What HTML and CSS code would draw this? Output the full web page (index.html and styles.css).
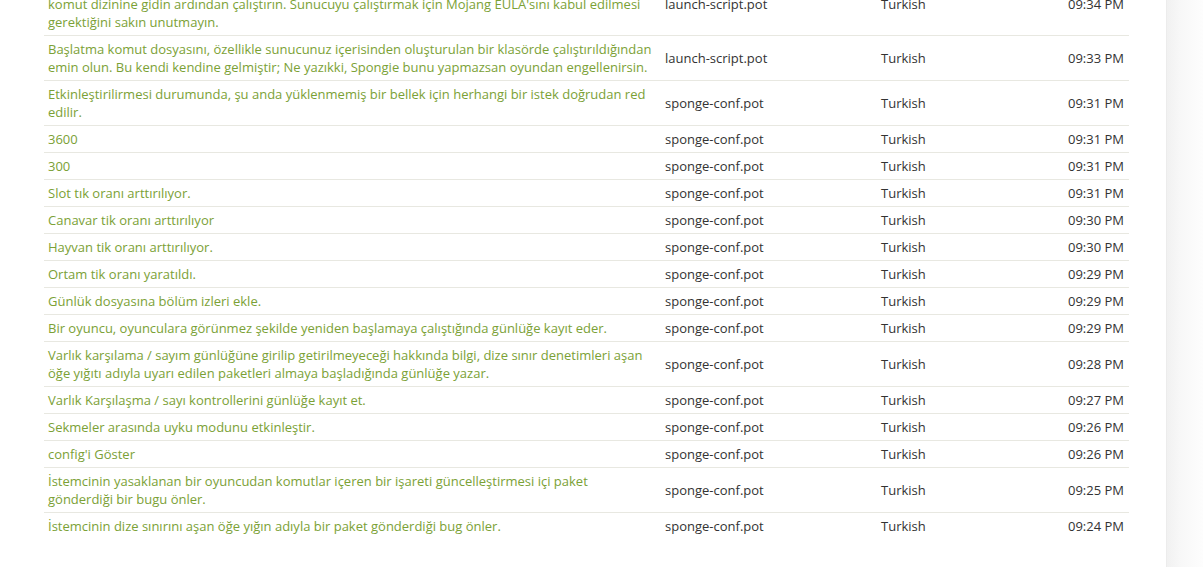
FILE: index.html
```html
<!DOCTYPE html>
<html lang="tr">
<head>
<meta charset="utf-8">
<title>Activity</title>
<link rel="stylesheet" href="styles.css">
</head>
<body>
<div class="layout">
  <main class="main">
    <table class="activity">
      <colgroup>
        <col class="c-text"><col class="c-file"><col class="c-lang"><col class="c-time">
      </colgroup>
      <tbody>
        <tr><td class="t">Sunucuyu başlatmak için lütfen başlatma komut dosyasını kullanın. Bunun için önce sunucunun ana komut dizinine gidin ardından çalıştırın. Sunucuyu çalıştırmak için Mojang EULA'sını kabul edilmesi gerektiğini sakın unutmayın.</td><td>launch-script.pot</td><td>Turkish</td><td class="tm">09:34 PM</td></tr>
        <tr><td class="t">Başlatma komut dosyasını, özellikle sunucunuz içerisinden oluşturulan bir klasörde çalıştırıldığından emin olun. Bu kendi kendine gelmiştir; Ne yazıkki, Spongie bunu yapmazsan oyundan engellenirsin.</td><td>launch-script.pot</td><td>Turkish</td><td class="tm">09:33 PM</td></tr>
        <tr><td class="t">Etkinleştirilirmesi durumunda, şu anda yüklenmemiş bir bellek için herhangi bir istek doğrudan red edilir.</td><td>sponge-conf.pot</td><td>Turkish</td><td class="tm">09:31 PM</td></tr>
        <tr><td class="t">3600</td><td>sponge-conf.pot</td><td>Turkish</td><td class="tm">09:31 PM</td></tr>
        <tr><td class="t">300</td><td>sponge-conf.pot</td><td>Turkish</td><td class="tm">09:31 PM</td></tr>
        <tr><td class="t">Slot tık oranı arttırılıyor.</td><td>sponge-conf.pot</td><td>Turkish</td><td class="tm">09:31 PM</td></tr>
        <tr><td class="t">Canavar tik oranı arttırılıyor</td><td>sponge-conf.pot</td><td>Turkish</td><td class="tm">09:30 PM</td></tr>
        <tr><td class="t">Hayvan tik oranı arttırılıyor.</td><td>sponge-conf.pot</td><td>Turkish</td><td class="tm">09:30 PM</td></tr>
        <tr><td class="t">Ortam tik oranı yaratıldı.</td><td>sponge-conf.pot</td><td>Turkish</td><td class="tm">09:29 PM</td></tr>
        <tr><td class="t">Günlük dosyasına bölüm izleri ekle.</td><td>sponge-conf.pot</td><td>Turkish</td><td class="tm">09:29 PM</td></tr>
        <tr><td class="t">Bir oyuncu, oyunculara görünmez şekilde yeniden başlamaya çalıştığında günlüğe kayıt eder.</td><td>sponge-conf.pot</td><td>Turkish</td><td class="tm">09:29 PM</td></tr>
        <tr><td class="t">Varlık karşılama / sayım günlüğüne girilip getirilmeyeceği hakkında bilgi, dize sınır denetimleri aşan öğe yığıtı adıyla uyarı edilen paketleri almaya başladığında günlüğe yazar.</td><td>sponge-conf.pot</td><td>Turkish</td><td class="tm">09:28 PM</td></tr>
        <tr><td class="t">Varlık Karşılaşma / sayı kontrollerini günlüğe kayıt et.</td><td>sponge-conf.pot</td><td>Turkish</td><td class="tm">09:27 PM</td></tr>
        <tr><td class="t">Sekmeler arasında uyku modunu etkinleştir.</td><td>sponge-conf.pot</td><td>Turkish</td><td class="tm">09:26 PM</td></tr>
        <tr><td class="t">config'i Göster</td><td>sponge-conf.pot</td><td>Turkish</td><td class="tm">09:26 PM</td></tr>
        <tr><td class="t">İstemcinin yasaklanan bir oyuncudan komutlar içeren bir işareti güncelleştirmesi içi paket gönderdiği bir bugu önler.</td><td>sponge-conf.pot</td><td>Turkish</td><td class="tm">09:25 PM</td></tr>
        <tr class="last"><td class="t">İstemcinin dize sınırını aşan öğe yığın adıyla bir paket gönderdiği bug önler.</td><td>sponge-conf.pot</td><td>Turkish</td><td class="tm">09:24 PM</td></tr>
      </tbody>
    </table>
  </main>
  <aside class="side"></aside>
</div>
</body>
</html>
```
FILE: styles.css
```css
html, body {
  margin: 0;
  padding: 0;
  background: #fff;
  overflow: hidden;
}
body {
  font-family: "Open Sans", "DejaVu Sans", sans-serif;
  font-size: 13px;
  line-height: 18px;
  color: #333;
}
.layout {
  display: flex;
  height: 567px;
}
.main {
  width: 1166px;
  flex: none;
  padding: 0 37px 0 44px;
  box-sizing: border-box;
  margin-top: -27px;
}
.side {
  flex: 1;
  border-left: 1px solid #ececec;
  background: linear-gradient(to right, #f1f1f1, #f8f8f8 40%, #fdfdfd);
}
.activity {
  width: 1085px;
  border-collapse: collapse;
  table-layout: fixed;
}
.c-text { width: 616px; }
.c-file { width: 216px; }
.c-lang { width: 160px; }
.c-time { width: 93px; }
.activity td {
  padding: 4px 5px;
  border-bottom: 1px solid #e8e8e1;
  vertical-align: middle;
}
.activity td.t {
  padding-left: 4px;
  padding-right: 5px;
  color: #7ba136;
}
.activity td.tm {
  text-align: right;
}
.activity tr.last td {
  border-bottom: none;
}
```
